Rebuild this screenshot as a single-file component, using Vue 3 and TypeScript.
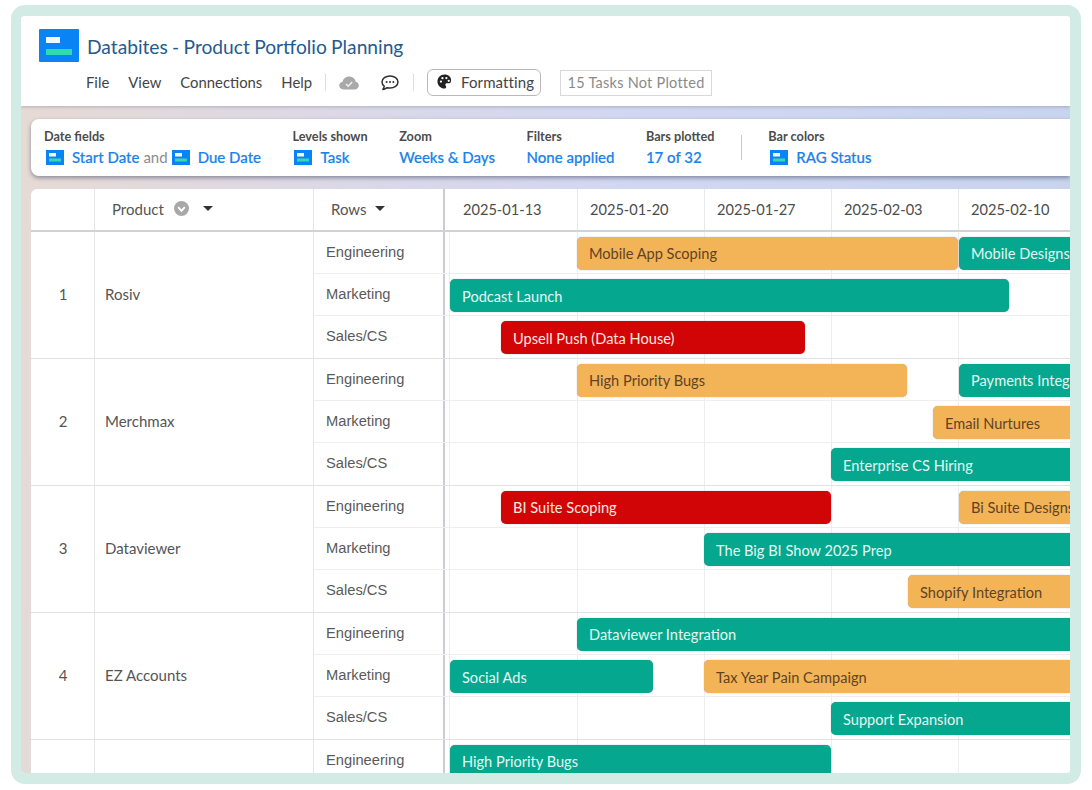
<template>
  <div class="page">
    <div class="frame">
      <header class="head">
        <div class="title-row">
          <svg class="logo" viewBox="0 0 40 33">
            <rect width="40" height="33" rx="1" fill="#0a84f5" />
            <rect x="7" y="8" width="14" height="6" fill="#f2f8ff" />
            <rect x="7" y="20" width="26" height="6" fill="#2fdcae" />
          </svg>
          <h1>Databites - Product Portfolio Planning</h1>
        </div>
        <nav class="menu">
          <span class="menu-item">File</span>
          <span class="menu-item">View</span>
          <span class="menu-item">Connections</span>
          <span class="menu-item last">Help</span>
          <i class="sep"></i>
          <svg class="cloud" viewBox="0 0 20 14">
            <path d="M4.500 13.500C2 13.500.2 11.800.2 9.600c0-2 1.400-3.500 3.300-3.800C4.300 2.600 7 .5 10.200.5c3.300 0 5.900 2.200 6.500 5.200 1.800.4 3.100 1.900 3.100 3.800 0 2.300-1.800 4-4.200 4z" fill="#a9a9a9" />
            <path d="M7 8l2.200 2.200L13.200 6" fill="none" stroke="#f1f1f1" stroke-width="1.500" />
          </svg>
          <svg class="chat" viewBox="0 0 18 16">
            <path d="M9 1C4.700 1 1 3.500 1 7c0 1.700.9 3.100 2.200 4.100-.1 1.100-.6 2.300-1.300 3.400 1.700-.2 3.200-.9 4.300-1.800.9.200 1.800.3 2.800.3 4.300 0 8-2.500 8-6S13.300 1 9 1z" fill="none" stroke="#2f2f2f" stroke-width="1.500" stroke-linejoin="round" />
            <circle cx="5.600" cy="7" r="1" fill="#2f2f2f" />
            <circle cx="9" cy="7" r="1" fill="#2f2f2f" />
            <circle cx="12.400" cy="7" r="1" fill="#2f2f2f" />
          </svg>
          <i class="sep second"></i>
          <button class="format-btn" type="button">
            <svg class="palette" viewBox="0 0 16 16">
              <path d="M8 .5C3.800.5.500 3.800.500 8s3.300 7.500 7.500 7.500c1.100 0 1.800-.8 1.800-1.700 0-.5-.2-.9-.5-1.200-.3-.3-.4-.7-.4-1.100 0-.9.700-1.600 1.600-1.600h1.800c1.500 0 2.700-1.200 2.700-2.800C15.500 3.300 12.200.5 8 .5z" fill="#222" />
              <circle cx="4.200" cy="8" r="1.200" fill="#fff" />
              <circle cx="5.800" cy="4.500" r="1.200" fill="#fff" />
              <circle cx="10" cy="4.300" r="1.200" fill="#fff" />
              <circle cx="12.500" cy="7.200" r="1.200" fill="#fff" />
            </svg>
            Formatting
          </button>
          <span class="not-plotted">15 Tasks Not Plotted</span>
        </nav>
      </header>

      <main class="body">
        <section class="toolbar">
          <div class="tool">
            <div class="tool-label">Date fields</div>
            <div class="tool-value">
              <svg class="mini" viewBox="0 0 18 15"><rect width="18" height="15" fill="#0a84f5" /><rect x="3" y="3" width="7" height="3.500" fill="#eef7ff" /><rect x="3" y="8.500" width="12" height="3" fill="#2fdcae" /></svg>
              <span class="val">Start Date</span>
              <span class="and">and</span>
              <svg class="mini" viewBox="0 0 18 15"><rect width="18" height="15" fill="#0a84f5" /><rect x="3" y="3" width="7" height="3.500" fill="#eef7ff" /><rect x="3" y="8.500" width="12" height="3" fill="#2fdcae" /></svg>
              <span class="val">Due Date</span>
            </div>
          </div>
          <div class="tool">
            <div class="tool-label">Levels shown</div>
            <div class="tool-value">
              <svg class="mini" viewBox="0 0 18 15"><rect width="18" height="15" fill="#0a84f5" /><rect x="3" y="3" width="7" height="3.500" fill="#eef7ff" /><rect x="3" y="8.500" width="12" height="3" fill="#2fdcae" /></svg>
              <span class="val">Task</span>
            </div>
          </div>
          <div class="tool">
            <div class="tool-label">Zoom</div>
            <div class="tool-value"><span class="val plain">Weeks &amp; Days</span></div>
          </div>
          <div class="tool">
            <div class="tool-label">Filters</div>
            <div class="tool-value"><span class="val plain">None applied</span></div>
          </div>
          <div class="tool">
            <div class="tool-label">Bars plotted</div>
            <div class="tool-value"><span class="val plain">17 of 32</span></div>
          </div>
          <i class="tool-sep"></i>
          <div class="tool colors">
            <div class="tool-label">Bar colors</div>
            <div class="tool-value">
              <svg class="mini" viewBox="0 0 18 15"><rect width="18" height="15" fill="#0a84f5" /><rect x="3" y="3" width="7" height="3.500" fill="#eef7ff" /><rect x="3" y="8.500" width="12" height="3" fill="#2fdcae" /></svg>
              <span class="val">RAG Status</span>
            </div>
          </div>
        </section>

        <section class="table">
          <div class="thead">
            <div class="c-num"></div>
            <div class="c-product th">
              Product
              <svg class="check" viewBox="0 0 16 16">
                <circle cx="8" cy="8" r="8" fill="#a8a8a8" />
                <path d="M4.500 6.500L8 10.500l3.500-4" fill="none" stroke="#fff" stroke-width="2" />
              </svg>
              <i class="caret product-caret"></i>
            </div>
            <div class="c-rows th rows-head">Rows <i class="caret"></i></div>
            <div class="dates">
              <div v-for="d in dates" :key="d" class="date">{{ d }}</div>
            </div>
          </div>

          <div v-for="g in groups" :key="g.num" class="group">
            <div class="c-num num-cell">{{ g.num }}</div>
            <div class="c-product name-cell">{{ g.name }}</div>
            <div class="lanes">
              <div v-for="row in g.rows" :key="row.label" class="lane">
                <div class="c-rows row-label">{{ row.label }}</div>
                <div class="track">
                  <div v-for="d in dates" :key="d" class="grid-cell"></div>
                  <div
                    v-for="bar in row.bars"
                    :key="bar.text"
                    class="bar"
                    :class="bar.color"
                    :style="{ left: bar.from + 'px', width: bar.to - bar.from + 'px' }"
                  >
                    {{ bar.text }}
                  </div>
                </div>
              </div>
            </div>
          </div>
        </section>
      </main>
    </div>
  </div>
</template>

<script setup lang="ts">
type BarColor = 'teal' | 'orange' | 'red'

interface Bar {
  text: string
  from: number
  to: number
  color: BarColor
}

interface Row {
  label: string
  bars: Bar[]
}

interface Group {
  num: number
  name: string
  rows: Row[]
}

const dates = ['2025-01-13', '2025-01-20', '2025-01-27', '2025-02-03', '2025-02-10']

// bar positions are px from the start of the chart
const END = 760

const groups: Group[] = [
  {
    num: 1,
    name: 'Rosiv',
    rows: [
      {
        label: 'Engineering',
        bars: [
          { text: 'Mobile App Scoping', from: 128, to: 509, color: 'orange' },
          { text: 'Mobile Designs', from: 510, to: END, color: 'teal' }
        ]
      },
      { label: 'Marketing', bars: [{ text: 'Podcast Launch', from: 1, to: 560, color: 'teal' }] },
      { label: 'Sales/CS', bars: [{ text: 'Upsell Push (Data House)', from: 52, to: 356, color: 'red' }] }
    ]
  },
  {
    num: 2,
    name: 'Merchmax',
    rows: [
      {
        label: 'Engineering',
        bars: [
          { text: 'High Priority Bugs', from: 128, to: 458, color: 'orange' },
          { text: 'Payments Integration', from: 510, to: END, color: 'teal' }
        ]
      },
      { label: 'Marketing', bars: [{ text: 'Email Nurtures', from: 484, to: END, color: 'orange' }] },
      { label: 'Sales/CS', bars: [{ text: 'Enterprise CS Hiring', from: 382, to: END, color: 'teal' }] }
    ]
  },
  {
    num: 3,
    name: 'Dataviewer',
    rows: [
      {
        label: 'Engineering',
        bars: [
          { text: 'BI Suite Scoping', from: 52, to: 382, color: 'red' },
          { text: 'Bi Suite Designs', from: 510, to: END, color: 'orange' }
        ]
      },
      { label: 'Marketing', bars: [{ text: 'The Big BI Show 2025 Prep', from: 255, to: END, color: 'teal' }] },
      { label: 'Sales/CS', bars: [{ text: 'Shopify Integration', from: 459, to: END, color: 'orange' }] }
    ]
  },
  {
    num: 4,
    name: 'EZ Accounts',
    rows: [
      { label: 'Engineering', bars: [{ text: 'Dataviewer Integration', from: 128, to: END, color: 'teal' }] },
      {
        label: 'Marketing',
        bars: [
          { text: 'Social Ads', from: 1, to: 204, color: 'teal' },
          { text: 'Tax Year Pain Campaign', from: 255, to: END, color: 'orange' }
        ]
      },
      { label: 'Sales/CS', bars: [{ text: 'Support Expansion', from: 382, to: END, color: 'teal' }] }
    ]
  },
  {
    num: 5,
    name: '',
    rows: [
      { label: 'Engineering', bars: [{ text: 'High Priority Bugs', from: 1, to: 382, color: 'teal' }] }
    ]
  }
]
</script>

<style>
html,
body {
  margin: 0;
  background: #fff;
}
</style>

<style scoped>
.page {
  width: 1092px;
  height: 790px;
  padding: 5px 11px 6px 11px;
  box-sizing: border-box;
  overflow: hidden;
  font-family: Lato, 'Liberation Sans', sans-serif;
}

.frame {
  width: 1070px;
  height: 779px;
  box-sizing: border-box;
  border: 11px solid #d2ebe5;
  border-left-width: 10px;
  border-radius: 14px;
  display: flex;
  flex-direction: column;
  overflow: hidden;
  background: #fff;
}

.head {
  height: 90px;
  flex: none;
  background: #fff;
  position: relative;
  z-index: 1;
  box-shadow: 0 1px 3px rgba(120, 125, 150, 0.45);
}

.title-row {
  display: flex;
  align-items: center;
  padding: 13px 0 0 18px;
  height: 33px;
}

.logo {
  width: 40px;
  height: 33px;
  flex: none;
}

h1 {
  margin: 1px 0 0 8px;
  font-size: 19.2px;
  font-weight: 400;
  color: #245a8e;
  word-spacing: -0.6px;
}

.menu {
  display: flex;
  align-items: center;
  height: 27px;
  margin-top: 7px;
  padding-left: 65px;
  font-size: 14.85px;
  color: #444;
}

.menu-item {
  margin-right: 19px;
  margin-bottom: 2px;
}

.menu-item.last {
  margin-right: 13px;
}

.sep {
  width: 1px;
  height: 17px;
  background: #dedede;
}

.sep.second {
  margin-left: 14px;
}

.cloud {
  width: 20px;
  height: 14px;
  margin-left: 13px;
}

.chat {
  width: 18px;
  height: 16px;
  margin-left: 22px;
}

.format-btn {
  display: flex;
  align-items: center;
  width: 114px;
  height: 27px;
  margin-left: 13px;
  padding: 0 0 2px 9px;
  box-sizing: border-box;
  border: 1px solid #b9b9b9;
  border-radius: 6px;
  background: #fff;
  font-family: inherit;
  font-size: 15px;
  color: #444;
  letter-spacing: 0.1px;
}

.palette {
  width: 15px;
  height: 15px;
  margin-right: 9px;
}

.not-plotted {
  margin-left: 19px;
  width: 152px;
  height: 26px;
  box-sizing: border-box;
  border: 1px solid #d8d8d8;
  line-height: 24px;
  text-align: center;
  font-size: 14.5px;
  color: #8a8a8a;
  letter-spacing: 0.25px;
}

.body {
  flex: 1;
  min-height: 0;
  display: flex;
  flex-direction: column;
  gap: 13px;
  padding: 13px 0 0 10px;
  background: linear-gradient(95deg, #e6dad4 0%, #dcd8e6 28%, #d2d7f1 55%, #c7d3ee 100%);
}

.toolbar {
  flex: none;
  height: 57px;
  box-sizing: border-box;
  display: flex;
  align-items: center;
  gap: 31.5px;
  padding-left: 13px;
  background: #fff;
  border-radius: 8px 0 0 8px;
  box-shadow: 0 2px 4px rgba(70, 75, 100, 0.55);
}

.tool-label {
  margin-top: 1px;
  font-size: 12.7px;
  font-weight: 700;
  color: #4c4c4c;
  line-height: 15px;
}

.tool-value {
  display: flex;
  align-items: center;
  height: 20px;
  margin-top: 3px;
  padding-left: 2px;
  white-space: nowrap;
}

.val {
  margin-left: 8px;
  font-size: 15px;
  font-weight: 500;
  color: #1b82ea;
  -webkit-text-stroke: 0.2px #1b82ea;
}

.val.plain {
  margin-left: -2px;
}

.and {
  margin: 0 4px;
  font-size: 15px;
  color: #8c8c8c;
}

.mini {
  width: 18px;
  height: 15px;
  flex: none;
}

.tool-sep {
  width: 1px;
  height: 25px;
  margin-left: -4.5px;
  margin-right: -5.5px;
  background: #c8c8c8;
}

.table {
  flex: 1;
  min-height: 0;
  overflow: hidden;
  background: #fff;
  border-radius: 6px 0 0 0;
  color: #555;
}

.thead {
  display: flex;
  height: 43px;
  box-sizing: border-box;
  border-bottom: 2px solid #cfd2d6;
}

.c-num {
  width: 64px;
  flex: none;
  box-sizing: border-box;
  border-right: 1px solid #e6e6e6;
}

.c-product {
  width: 219px;
  flex: none;
  box-sizing: border-box;
  border-right: 1px solid #e6e6e6;
}

.c-rows {
  width: 131px;
  flex: none;
  box-sizing: border-box;
  border-right: 2px solid #c9ccd0;
}

.th {
  display: flex;
  align-items: center;
  padding-bottom: 2px;
  font-size: 15px;
  color: #555;
}

.c-product.th {
  padding-left: 17px;
}

.rows-head {
  padding-left: 17px;
}

.check {
  width: 15px;
  height: 15px;
  margin-left: 10px;
}

.caret {
  width: 0;
  height: 0;
  margin-left: 8px;
  border-left: 5px solid transparent;
  border-right: 5px solid transparent;
  border-top: 5px solid #333;
}

.product-caret {
  margin-left: 14px;
}

.dates {
  flex: 1;
  display: flex;
  margin-left: 4px;
}

.date {
  width: 127px;
  flex: none;
  box-sizing: border-box;
  padding-left: 12px;
  border-right: 1px solid #e8e8e8;
  line-height: 41px;
  font-size: 14.6px;
  color: #4c4c4c;
}

.date:first-child {
  width: 129px;
  padding-left: 14px;
}

.group {
  display: flex;
  height: 127px;
  box-sizing: border-box;
  border-bottom: 1px solid #e2e2e2;
}

.num-cell,
.name-cell {
  display: flex;
  align-items: center;
  font-size: 15px;
}

.num-cell {
  justify-content: center;
  padding: 0 0 2px 1px;
}

.name-cell {
  padding: 0 0 2px 10px;
}

.lanes {
  flex: 1;
  display: flex;
  flex-direction: column;
}

.lane {
  flex: none;
  height: 42px;
  box-sizing: border-box;
  display: flex;
  border-bottom: 1px solid #eeeeee;
}

.lane:last-child {
  border-bottom: 0;
}

.row-label {
  padding: 12px 0 0 12px;
  font-family: 'Liberation Sans', Arial, sans-serif;
  font-size: 14.7px;
  color: #5a5a5a;
}

.track {
  position: relative;
  flex: 1;
  display: flex;
  margin-left: 4px;
}

.grid-cell {
  width: 127px;
  flex: none;
  box-sizing: border-box;
  border-right: 1px solid #eeeeee;
}

.grid-cell:first-child {
  width: 129px;
  border-left: 1px solid #eeeeee;
}

.bar {
  position: absolute;
  top: 5px;
  height: 33px;
  box-sizing: border-box;
  padding-left: 12px;
  line-height: 33px;
  border-radius: 5px;
  font-size: 14.6px;
  white-space: nowrap;
  overflow: hidden;
  box-shadow: 0 0 1px rgba(60, 60, 70, 0.6);
}

.lane + .lane .bar {
  line-height: 35px;
}

.teal {
  background: #05a88f;
  color: #e4f7f2;
}

.orange {
  background: #f3b357;
  color: #5f4424;
}

.red {
  background: #d10505;
  color: #fde9e2;
}
</style>
